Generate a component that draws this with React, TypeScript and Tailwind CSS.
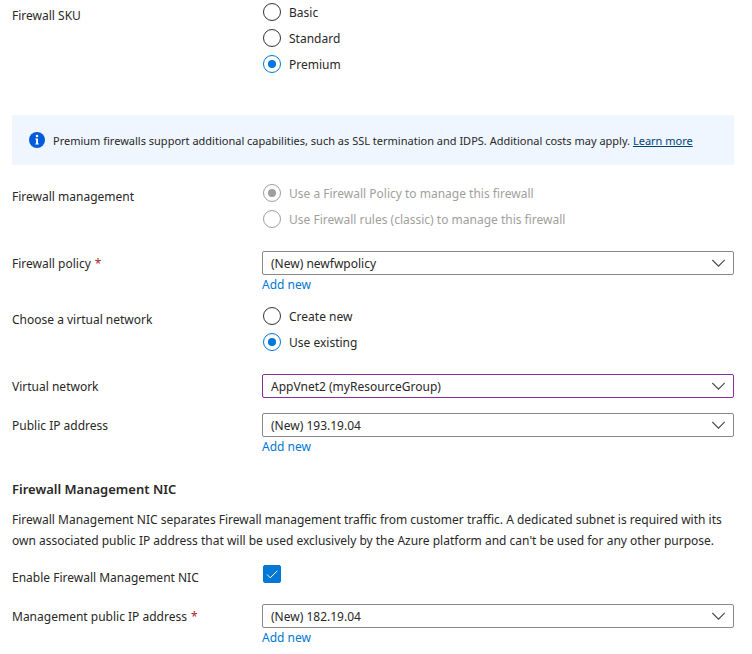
import { useState } from "react";
import type { ReactNode } from "react";

function Row({
  label,
  htmlFor,
  id,
  required,
  className = "",
  children,
}: {
  label: string;
  htmlFor?: string;
  id?: string;
  required?: boolean;
  className?: string;
  children: ReactNode;
}) {
  const content = (
    <>
      {label}
      {required && <span className="ml-1 text-[#a4262c]">*</span>}
    </>
  );
  return (
    <div className={`flex ${className}`}>
      <div className="w-[250px] shrink-0 pt-0.5 leading-[22px]">
        {htmlFor ? <label htmlFor={htmlFor}>{content}</label> : <span id={id}>{content}</span>}
      </div>
      <div className="min-w-0 flex-1">{children}</div>
    </div>
  );
}

function RadioGroup({
  name,
  labelledBy,
  options,
  initial,
  disabled = false,
}: {
  name: string;
  labelledBy: string;
  options: string[];
  initial: string;
  disabled?: boolean;
}) {
  const [value, setValue] = useState(initial);
  return (
    <div role="radiogroup" aria-labelledby={labelledBy} className="flex flex-col items-start gap-2 pl-px">
      {options.map((option) => (
        <label key={option} className={`flex items-center gap-2 ${disabled ? "text-[#a19f9d]" : ""}`}>
          <input
            type="radio"
            name={name}
            disabled={disabled}
            checked={value === option}
            onChange={() => setValue(option)}
            className="grid size-[18px] shrink-0 appearance-none place-items-center rounded-full border border-[#323130] before:size-2 before:rounded-full before:content-[''] checked:border-[#0078d4] checked:before:bg-[#0078d4] disabled:border-[#a19f9d] disabled:before:bg-transparent disabled:checked:before:bg-[#a19f9d]"
          />
          <span className="pt-0.5 leading-4">{option}</span>
        </label>
      ))}
    </div>
  );
}

function Dropdown({ id, value, edited = false }: { id: string; value: string; edited?: boolean }) {
  return (
    <div className="relative">
      <select
        id={id}
        defaultValue={value}
        className={`block h-6 w-full appearance-none rounded-xs border bg-white pt-0.5 pr-8 pl-2 leading-4 ${
          edited ? "border-[#8a2da5]" : "border-[#8a8886]"
        }`}
      >
        <option>{value}</option>
      </select>
      <svg
        aria-hidden="true"
        viewBox="0 0 14 8"
        className="pointer-events-none absolute top-2 right-2 h-2 w-3.5"
        fill="none"
        stroke="#484644"
        strokeWidth="1.1"
      >
        <path d="M0.3 0.9 6.5 7.1 12.7 0.9" />
      </svg>
    </div>
  );
}

function AddNew() {
  return (
    <a href="#" className="block w-fit pt-0.5 leading-4 text-[#0078d4]">
      Add new
    </a>
  );
}

export default function App() {
  const [enabled, setEnabled] = useState(true);
  return (
    <main className="bg-white pt-[3px] pr-[18px] pb-2 pl-3 font-['Noto_Sans','Open_Sans',sans-serif] text-xs text-[#292827]">
      <Row label="Firewall SKU" id="sku">
        <RadioGroup name="sku" labelledBy="sku" options={["Basic", "Standard", "Premium"]} initial="Premium" />
      </Row>

      <div className="mt-[42px] flex min-h-[50px] items-center gap-2 rounded-xs bg-[#eff6ff] px-[17px] text-[11px]">
        <svg aria-hidden="true" viewBox="0 0 16 16" className="size-4 shrink-0">
          <circle cx="8" cy="8" r="8" fill="#015cda" />
          <circle cx="8" cy="4" r="1.3" fill="#fff" />
          <path d="M6.3 6.5H9v5h.8v1H6.3v-1h.8v-4h-.8z" fill="#fff" />
        </svg>
        <p className="pt-0.5 leading-4">
          Premium firewalls support additional capabilities, such as SSL termination and IDPS. Additional costs may
          apply.{" "}
          <a href="#" className="text-[#004578] underline">
            Learn more
          </a>
        </p>
      </div>

      <Row label="Firewall management" id="management" className="mt-[19px]">
        <RadioGroup
          name="management"
          labelledBy="management"
          options={["Use a Firewall Policy to manage this firewall", "Use Firewall rules (classic) to manage this firewall"]}
          initial="Use a Firewall Policy to manage this firewall"
          disabled
        />
      </Row>

      <Row label="Firewall policy" htmlFor="policy" required className="mt-[23px]">
        <Dropdown id="policy" value="(New) newfwpolicy" />
        <AddNew />
      </Row>

      <Row label="Choose a virtual network" id="network-mode" className="mt-[14px]">
        <RadioGroup
          name="network-mode"
          labelledBy="network-mode"
          options={["Create new", "Use existing"]}
          initial="Use existing"
        />
      </Row>

      <Row label="Virtual network" htmlFor="network" className="mt-[23px]">
        <Dropdown id="network" value="AppVnet2 (myResourceGroup)" edited />
      </Row>

      <Row label="Public IP address" htmlFor="public-ip" className="mt-[15px]">
        <Dropdown id="public-ip" value="(New) 193.19.04" />
        <AddNew />
      </Row>

      <h2 className="mt-[25px] text-[13px] leading-[18px] font-semibold">Firewall Management NIC</h2>
      <p className="mt-[11px] leading-[21px]">
        Firewall Management NIC separates Firewall management traffic from customer traffic. A dedicated subnet is
        required with its own associated public IP address that will be used exclusively by the Azure platform and
        can't be used for any other purpose.
      </p>

      <Row label="Enable Firewall Management NIC" htmlFor="enable-nic" className="mt-[14px]">
        <div className="relative ml-px size-[18px]">
          <input
            id="enable-nic"
            type="checkbox"
            checked={enabled}
            onChange={(e) => setEnabled(e.target.checked)}
            className="block size-[18px] appearance-none rounded-xs border border-[#323130] checked:border-[#0078d4] checked:bg-[#0078d4]"
          />
          <svg
            aria-hidden="true"
            viewBox="0 0 18 18"
            className="pointer-events-none absolute inset-0"
            fill="none"
            stroke="#fff"
            strokeWidth="1"
          >
            <path d="M4 9.5 7.3 12.8 14.3 5.8" />
          </svg>
        </div>
      </Row>

      <Row label="Management public IP address" htmlFor="management-ip" required className="mt-[15px]">
        <Dropdown id="management-ip" value="(New) 182.19.04" />
        <AddNew />
      </Row>
    </main>
  );
}
